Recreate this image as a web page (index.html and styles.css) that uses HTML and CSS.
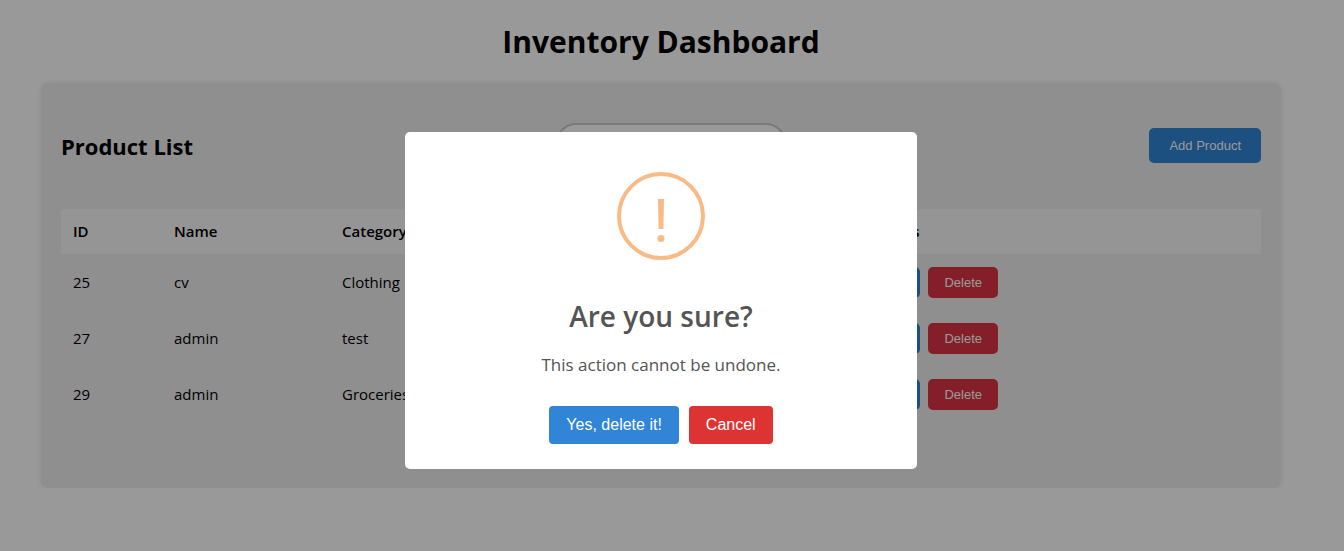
FILE: index.html
```html
<!DOCTYPE html>
<html lang="en">
<head>
<meta charset="utf-8">
<title>Inventory Dashboard</title>
<link rel="stylesheet" href="styles.css">
</head>
<body class="page">
<main class="dashboard">
  <h1 class="dashboard-title">Inventory Dashboard</h1>
  <section class="card">
    <header class="card-header">
      <h2 class="card-title">Product List</h2>
      <input class="search" type="search" aria-label="Search products">
      <button class="btn btn-add" type="button">Add Product</button>
    </header>
    <table class="products">
      <colgroup>
        <col class="col-id"><col class="col-name"><col class="col-category"><col class="col-details"><col>
      </colgroup>
      <thead>
        <tr><th>ID</th><th>Name</th><th>Category</th><th></th><th>Actions</th></tr>
      </thead>
      <tbody>
        <tr>
          <td>25</td><td>cv</td><td>Clothing</td><td></td>
          <td><div class="row-actions"><button class="btn btn-edit" type="button">Edit</button><button class="btn btn-delete" type="button">Delete</button></div></td>
        </tr>
        <tr>
          <td>27</td><td>admin</td><td>test</td><td></td>
          <td><div class="row-actions"><button class="btn btn-edit" type="button">Edit</button><button class="btn btn-delete" type="button">Delete</button></div></td>
        </tr>
        <tr>
          <td>29</td><td>admin</td><td>Groceries</td><td></td>
          <td><div class="row-actions"><button class="btn btn-edit" type="button">Edit</button><button class="btn btn-delete" type="button">Delete</button></div></td>
        </tr>
      </tbody>
    </table>
  </section>
</main>
<div class="overlay">
  <div class="modal" role="dialog" aria-modal="true" aria-labelledby="modal-title" aria-describedby="modal-text">
    <svg class="modal-icon" viewBox="0 0 88 88" aria-hidden="true">
      <circle cx="44" cy="44" r="42" fill="none" stroke="#f8bb86" stroke-width="4"/>
      <path d="M41 27h6l-.6 30h-4.8z" fill="#f8bb86"/>
      <circle cx="44" cy="66.500" r="3.500" fill="#f8bb86"/>
    </svg>
    <h2 class="modal-title" id="modal-title">Are you sure?</h2>
    <p class="modal-text" id="modal-text">This action cannot be undone.</p>
    <div class="modal-actions">
      <button class="modal-btn confirm" type="button">Yes, delete it!</button>
      <button class="modal-btn cancel" type="button">Cancel</button>
    </div>
  </div>
</div>
</body>
</html>
```

FILE: styles.css
```css
* {
  box-sizing: border-box;
}

.page {
  margin: 0;
  padding: 20px 22px 0 0;
  background: #fff;
  color: #000;
  font-family: "Segoe UI", "Open Sans", "Noto Sans", sans-serif;
  font-size: 15px;
}

.dashboard {
  max-width: 1240px;
  margin: 0 auto;
}

.dashboard-title {
  margin: 0 0 19px;
  font-size: 30px;
  line-height: 44px;
  text-align: center;
}

.card {
  padding: 40px 20px 66px;
  border-radius: 8px;
  background: #eee;
  box-shadow: 0 0 5px rgba(0, 0, 0, 0.1);
}

.card-header {
  display: flex;
  align-items: center;
  justify-content: space-between;
  margin-bottom: 41px;
}

.card-title {
  margin: 0;
  font-size: 22px;
  line-height: 32px;
}

.search {
  width: 230px;
  height: 45px;
  padding: 10px 20px;
  border: 2px solid #ccc;
  border-radius: 20px;
  background: #fff;
  font: inherit;
}

.products {
  width: 100%;
  border-collapse: collapse;
  table-layout: fixed;
}

.col-id {
  width: 101px;
}

.col-name {
  width: 168px;
}

.col-category {
  width: 168px;
}

.col-details {
  width: 356px;
}

.products th {
  padding: 12px;
  background: #f8f8fa;
  font-weight: 600;
  line-height: 21px;
  text-align: left;
}

.products td {
  height: 56px;
  padding: 12px;
  line-height: 21px;
}

.row-actions {
  display: flex;
  gap: 8px;
}

.btn {
  border: 0;
  border-radius: 5px;
  color: #fff;
  font-family: "Liberation Sans", Arial, sans-serif;
  font-size: 13px;
  line-height: 15px;
}

.btn-add {
  padding: 10px 20px;
  background: #3085d6;
}

.btn-edit {
  padding: 8px 16px;
  background: #3085d6;
}

.btn-delete {
  padding: 8px 16px;
  background: #dc3545;
}

.overlay {
  position: fixed;
  inset: 0;
  display: flex;
  align-items: flex-start;
  justify-content: center;
  padding: 132px 22px 0 0;
  background: rgba(0, 0, 0, 0.4);
}

.modal {
  display: flex;
  flex-direction: column;
  align-items: center;
  width: 100%;
  max-width: 512px;
  padding: 40px 20px 25px;
  border-radius: 5px;
  background: #fff;
  color: #545454;
}

.modal-icon {
  width: 88px;
  height: 88px;
}

.modal-title {
  margin: 36px 0 0;
  font-size: 28px;
  font-weight: 600;
  line-height: 40px;
}

.modal-text {
  margin: 16px 0 0;
  font-size: 17px;
  line-height: 26px;
}

.modal-actions {
  display: flex;
  gap: 10px;
  margin-top: 28px;
}

.modal-btn {
  padding: 10px 17px;
  border: 0;
  border-radius: 4px;
  color: #fff;
  font-family: "Liberation Sans", Arial, sans-serif;
  font-size: 16px;
  line-height: 18px;
}

.confirm {
  background: #3085d6;
}

.cancel {
  background: #d33;
}
```
